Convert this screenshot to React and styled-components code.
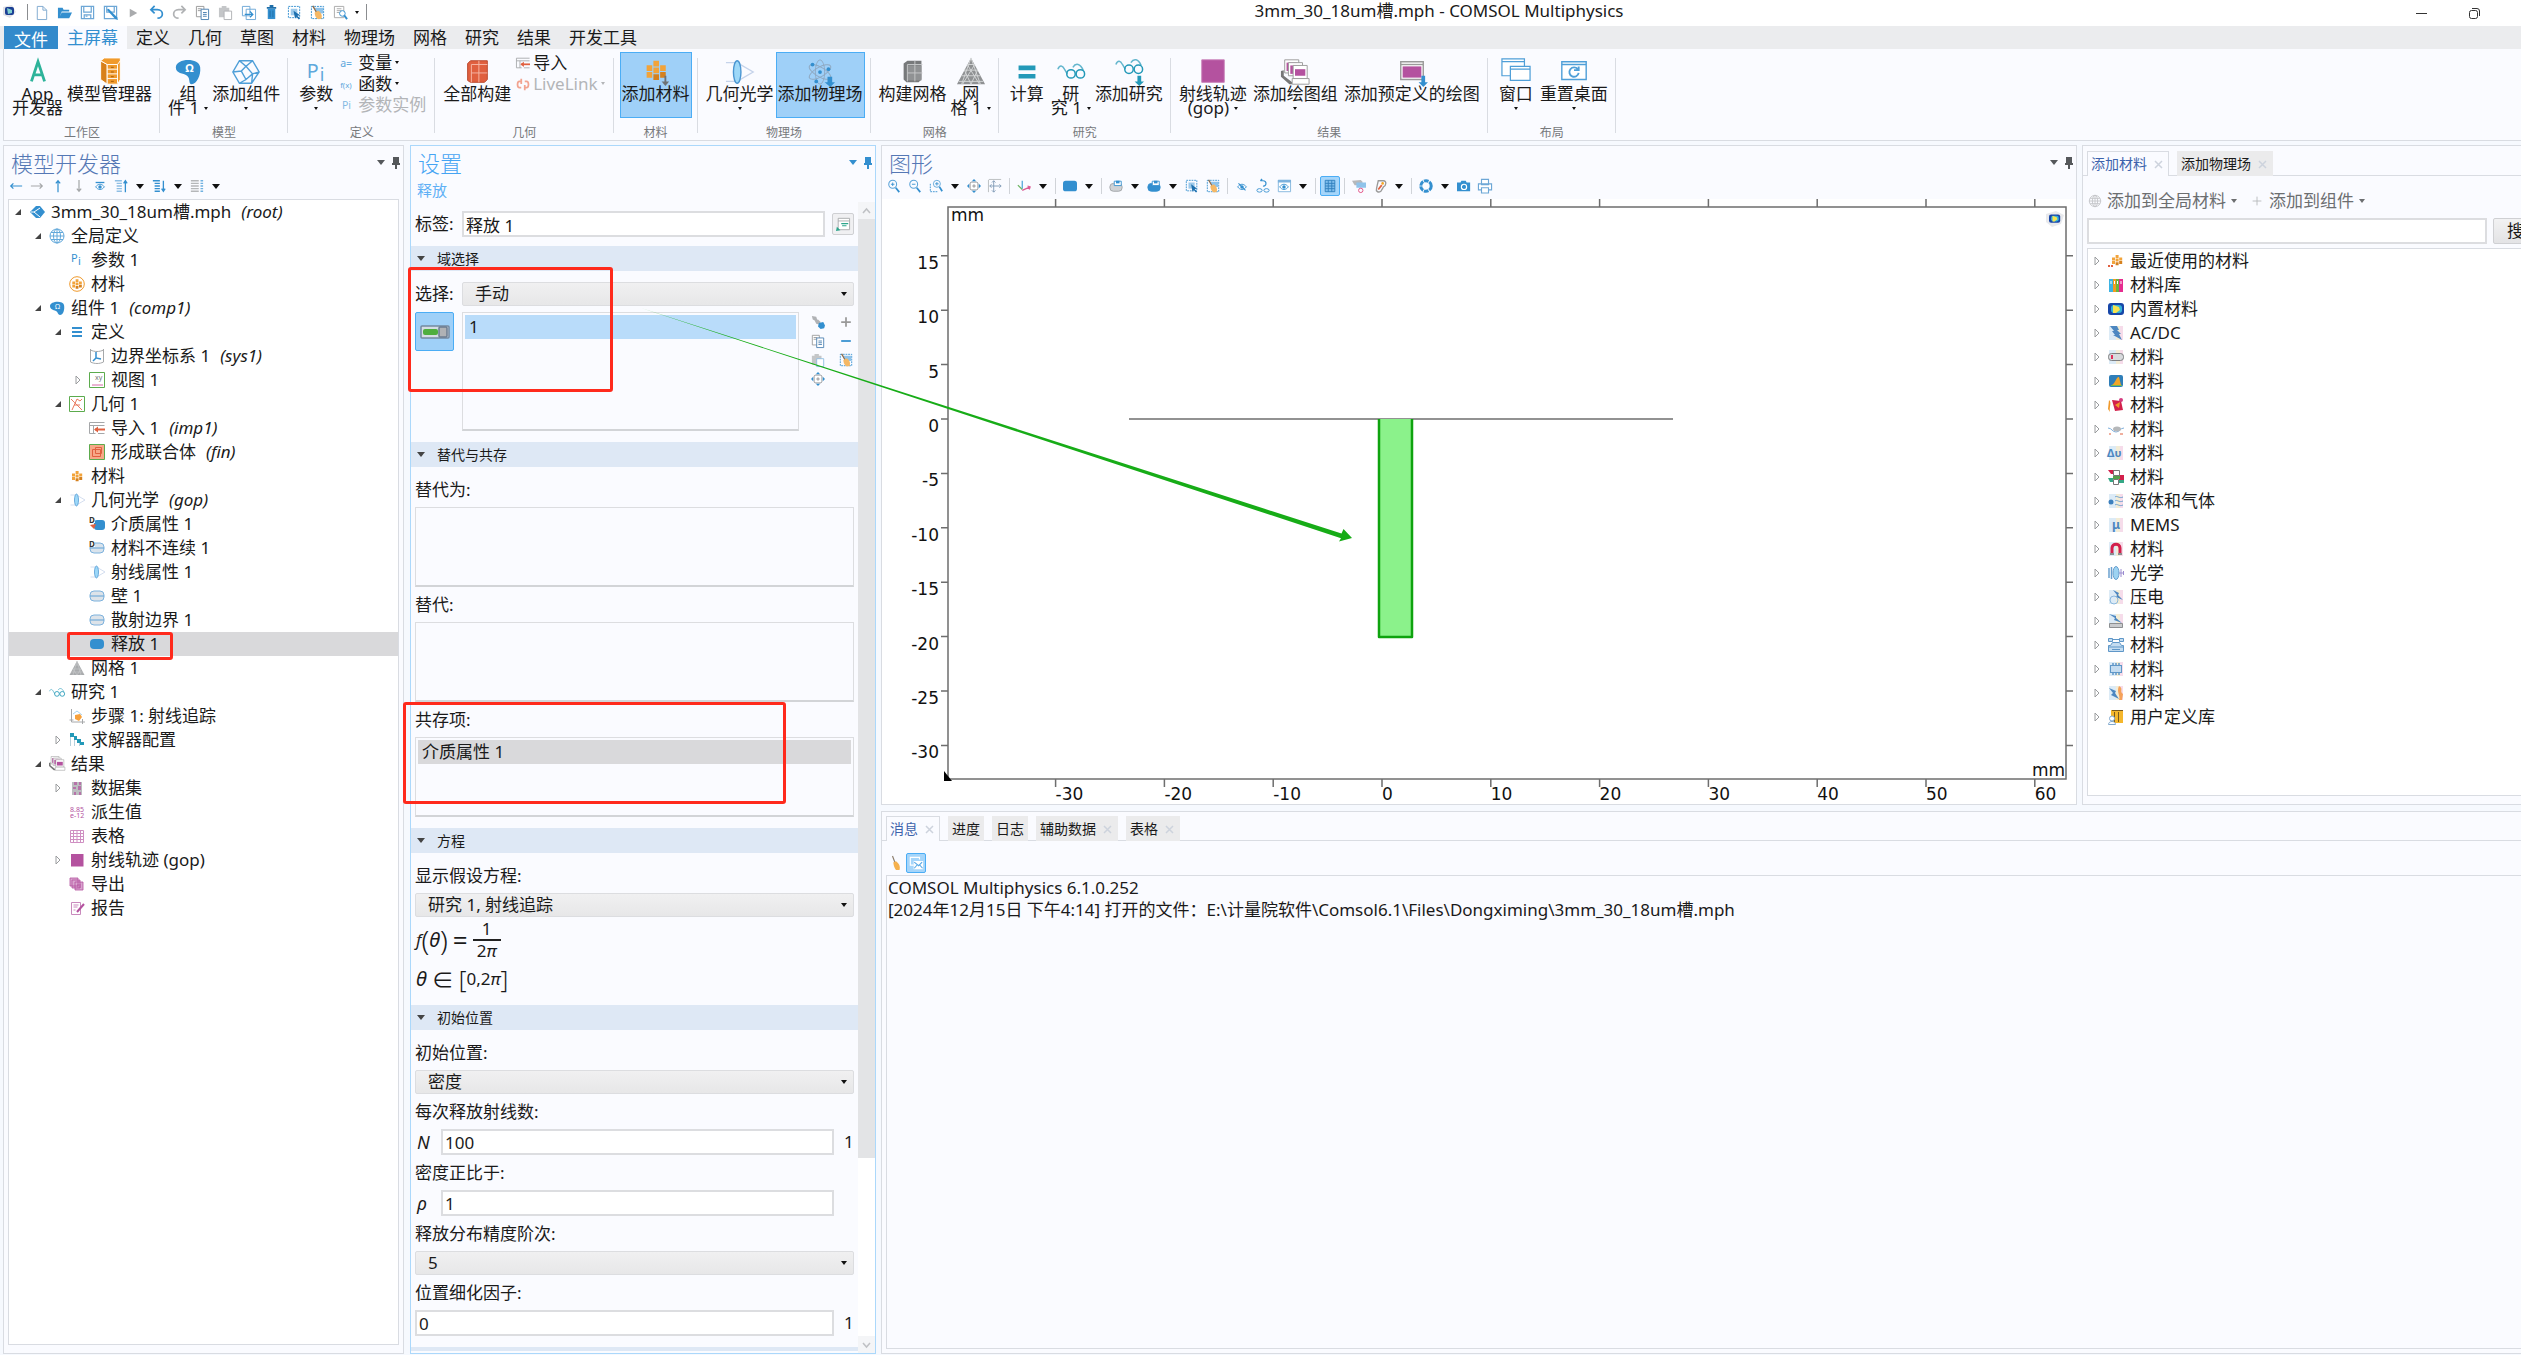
import React from 'react'
import styled, { createGlobalStyle, css } from 'styled-components'

const blue = '#338fcf'
const orange = '#f09a2c'
const teal = '#2399b8'
const purple = '#b4529f'
const red = '#e0603f'

/* ---------- icons ---------- */

const materialCells = (
  <g>
    <path fill="#f2a33a" d="M6 0h5v5H6zM0 4h5v5H0zM12 4h5v5h-5zM6 6h5v5H6zM0 10h5v5H0z" />
    <path fill="#d5811f" d="M12 10h5v5h-5zM6 12h5v5H6z" />
  </g>
)

const atom = (
  <g fill="none" stroke="#8fa9c2">
    <ellipse cx="13" cy="14" rx="5" ry="13" />
    <ellipse cx="13" cy="14" rx="5" ry="13" transform="rotate(60 13 14)" />
    <ellipse cx="13" cy="14" rx="5" ry="13" transform="rotate(-60 13 14)" />
    <g fill={blue} stroke="none">
      <circle cx="13" cy="14" r="2" />
      <circle cx="5" cy="6" r="2" />
      <circle cx="22" cy="11" r="2" />
      <circle cx="9" cy="24" r="2" />
    </g>
  </g>
)

const glasses = (
  <g fill="none" stroke={teal} strokeWidth="1.6">
    <path d="M1 8c2-5 5-4 7 0l3 5M17 6c3-5 8-4 11 3" opacity=".7" />
    <circle cx="15" cy="13" r="4.5" />
    <circle cx="25" cy="13" r="4.5" />
  </g>
)

const plotStack = (
  <g stroke="#9a9a9a">
    <path fill="#777" stroke="none" d="M0 13l3-1v6l9 7v2H9l-9-8z" />
    <path fill="#fff" d="M4 1h15v14H4z" />
    <path fill={purple} stroke="none" d="M6 4h11v9H6z" />
    <path fill="#fff" d="M8 4h15v14H8z" />
    <path fill={purple} stroke="none" d="M10 7h11v9H10z" />
    <path fill="#fff" d="M13 7h15v14H13z" />
    <path fill={purple} stroke="none" d="M15 11h11v7H15z" />
    <path fill="#fff" d="M12 21h18v6H12z" />
  </g>
)

const lens = (
  <g fill="none" stroke="#c5d3ea" strokeWidth="1.5">
    <path d="M1 4h12l17 10-17 10H1" />
    <ellipse cx="13" cy="14" rx="4" ry="12" fill="#9dd8f8" stroke="#4b96d2" />
  </g>
)

const selectBox = (
  <g>
    <path fill="none" stroke={blue} strokeDasharray="2 1" d="M1.5 1.5h12v12h-12z" />
    <path fill="#9cc9ea" d="M4 4h7v7H4z" />
    <path fill="#1d6fae" d="M7 6l7 5-3 .5 3 3-1.5 1-2.5-3-1.5 2z" />
  </g>
)

const brush = (
  <g>
    <path fill="none" stroke={blue} strokeDasharray="2 1" d="M1.5 1.5h13v13h-13z" />
    <path fill="#8fc3ea" d="M5 3h9v6H8z" />
    <path stroke="#8a6a4a" strokeWidth="1.5" d="M3 1l4 7" />
    <path fill="#f5b865" d="M5 8l4-2c4 3 4 6 3 9H8c-2-2-3-4-3-7z" />
  </g>
)

const capsule = (fill, line) => (
  <g>
    <rect x="1" y="3" width="14" height="10" rx="4" fill={fill} stroke="#7db2dd" />
    {line && <path stroke="#5fa1d6" d="M1 8h14" />}
  </g>
)

const printBox = (fill, stroke) => (
  <g>
    <rect x="1" y="5" width="14" height="9" rx="4" fill={fill} stroke={stroke} />
    <path fill="#fff" stroke={blue} d="M6 2.5h8v5H6z" />
    <path fill={blue} d="M8 2h4v3H8z" />
  </g>
)

const bolt = <path fill="#4d87c0" d="M2 1h7l2 4h-2l4 4h-2l3 6-9-5h2L4 6h2z" />
const pastel = (
  <g>
    <path fill="#dcebf6" d="M1 1h7v14H1z" />
    <path fill="#f3ecd6" d="M8 1h4v14H8z" />
    <path fill="#f6dcea" d="M12 1h3v14h-3z" />
  </g>
)
const colormap = (
  <g>
    <rect x="0" y="2" width="16" height="12" rx="3" fill="#1746a8" />
    <rect x="3" y="4" width="11" height="8" rx="3" fill="#35b3d8" />
    <path fill="#f7e34f" d="M5 4l6 2 1 3-4 3H5z" />
  </g>
)

const magnifier = (
  <g fill="none" stroke="#5aa3d8" strokeWidth="1.2">
    <circle cx="6.5" cy="6" r="4.5" />
    <path stroke={blue} strokeWidth="2" d="M10 10l4 5" />
  </g>
)

const eye = (
  <g>
    <path fill="none" stroke={blue} d="M3 9c3-4 7-4 10 0-3 4-7 4-10 0z" />
    <circle cx="8" cy="9" r="2" fill={blue} />
  </g>
)

const icons = {
  /* quick access */
  logo: <g><path fill="#e2e3e6" d="M1 3l9-2 4 7-6 6-7-3z" /><rect x="3" y="3" width="9" height="8" rx="2" fill="#1c3f94" /><path fill="#7fcfd0" d="M5 4l5 2v3l-4 1z" /></g>,
  newFile: <path fill="#fff" stroke="#7ea9cf" d="M3.5 1.5h6l4 4v10h-10zM9.5 1.5v4h4" />,
  open: <path fill={blue} d="M1 3h5l1 2h6v2H5l-2 5v2H1zM5 8h11l-3 6H2z" />,
  save: <path fill="none" stroke="#6da7d6" strokeWidth="1.3" d="M1.5 1.5h13v13h-13zM4 1.5v6h8v-6M4.5 14.5v-4h7v4M6 12h2" />,
  saveAs: <g><path fill="none" stroke="#6da7d6" strokeWidth="1.3" d="M1.5 1.5h13v13h-13zM4 1.5v6h8v-6" /><path fill={blue} d="M4 5l2-1 9 9 1 3-3-1z" /></g>,
  play: <path fill="#a9abad" d="M4 4l8 4.5-8 4.5z" />,
  undo: <path fill="none" stroke={blue} strokeWidth="1.8" d="M6 1L2 5l4 4M2 5h7c7 0 7 9 0 9" />,
  redo: <path fill="none" stroke="#b0b2b4" strokeWidth="1.8" d="M10 1l4 4-4 4M14 5H7c-7 0-7 9 0 9" />,
  copy: <g fill="#fff" stroke="#999"><path d="M1.5 1.5h8v11h-8zM3 4h4M3 6h4" /><path stroke="#4a7fb0" d="M6.5 4.5h8v11h-8zM8.5 8h4M8.5 10h4M8.5 12h4" /></g>,
  paste: <g><path fill="#c4c6c8" d="M1 3h11v10H1zM4 1h5v3H4z" /><path fill="#fff" stroke="#b0b2b4" d="M6.5 6.5h8v9h-8z" /></g>,
  pasteBlue: <g><path fill="#c4c6c8" d="M1 3h11v10H1zM4 1h5v3H4z" /><path fill="#fff" stroke="#8bbbe0" d="M6.5 6.5h8v9h-8z" /></g>,
  duplicate: <g fill="#fff" stroke="#6da7d6"><path d="M1.5 1.5h8v10h-8zM5.5 4.5h10v11h-10z" /><path stroke={blue} strokeWidth="1.5" d="M4 10h8M9.5 7l3 3-3 3" /></g>,
  trash: <g><path fill="#1f6ea8" d="M3 2h10v2H3zM6 0h4v2H6z" /><path fill={blue} d="M4 4h8v11H4z" /><path stroke="#1f6ea8" d="M6.5 6v7M9.5 6v7" /></g>,
  selectBox,
  brush,
  find: <g><path fill="#fff" stroke="#aaa" d="M1.5 1.5h10v12h-10zM4 4h5M4 6h5M4 8h3" /><circle cx="10" cy="9" r="3" fill="#fff" stroke={blue} /><path stroke={blue} strokeWidth="2" d="M12 11l3 4" /></g>,

  /* ribbon, small */
  variable: <text x="-1" y="12" fontSize="12" fill="#5fa8dc">a=</text>,
  fx: <text x="-1" y="12" fontSize="9" fill="#5fa8dc">f(x)</text>,
  paramCase: <g opacity=".6"><text x="1" y="13" fontSize="12" fill={blue}>Pi</text></g>,
  importIco: <g><path fill="none" stroke="#a5a7a9" d="M.5 2.5h15M.5 5.5h15M.5 2.5v11h6M4.5 5.5v8M9 13.5h6.5" /><path stroke={red} strokeWidth="2" d="M6 9.5h10" /><path fill={red} d="M5 9.5l4-3v6z" /></g>,
  livelink: <g fill="none" stroke="#f2a390" strokeWidth="2"><path d="M7 5H4c-3 0-3 7 0 7h2M9 12h3c3 0 3-7 0-7h-2M6 2v6M10 9v6" /></g>,

  /* tree */
  root: <g><path fill={blue} d="M7 2h4l5 6-5 6H7L1 8z" /><path fill="none" stroke="#fff" d="M11 4L5 8l6 5M5 8H2" /></g>,
  globe: <g fill="none" stroke="#62a8da"><circle cx="8" cy="8" r="7" /><ellipse cx="8" cy="8" rx="3.5" ry="7" /><path d="M1 8h14M2 4.5h12M2 11.5h12M8 1v14" /></g>,
  globeGrey: <g fill="none" stroke="#c3c5c8"><circle cx="8" cy="8" r="6.5" /><ellipse cx="8" cy="8" rx="3" ry="6.5" /><path d="M1 8h14M2.5 5h11M2.5 11h11M8 1v14" /></g>,
  pi: <g fill={blue}><text x="2" y="10" fontSize="11">P</text><text x="9" y="13" fontSize="11">i</text></g>,
  matRing: <g><circle cx="8" cy="8" r="7.3" fill="none" stroke={orange} /><g transform="translate(3.3 3.2) scale(.56)">{materialCells}</g></g>,
  mat: <g transform="translate(3 3) scale(.6)">{materialCells}</g>,
  comp: <g><path fill={blue} d="M1 6c0-5 13-6 14-1 1 5-1 10-4 10-2 0-2-3-4-4-3-1-6-2-6-5z" /><text x="6" y="9" fontSize="7" fill="#fff">Ω</text></g>,
  defs: <path fill={blue} d="M3 3h10v2H3zM3 7h10v2H3zM3 11h10v2H3z" />,
  csys: <g fill="none"><path stroke="#a6a8aa" d="M1.5 1v13c4 2 9 2 13 0V1M1.5 2c4 2 9 2 13 0" /><path stroke={blue} strokeWidth="1.5" d="M7 4v6l5 1M7 10l-3 3" /></g>,
  view: <g><path fill="#fff" stroke="#5cab4d" d="M.5.5h15v15H.5z" /><path stroke="#d76aa8" d="M3 13h11" /><text x="6" y="8" fontSize="7" fill="#777">xy</text></g>,
  geom: <g fill="none"><path stroke="#5cab4d" d="M.5.5h15v15H.5z" /><path stroke="#ea7a5f" d="M2 3c3 3 5 5 6 6l5 5M3 14l5-11 3 2 2-2M5 9h6" /></g>,
  union: <g><path fill="#f7a888" stroke="#5cab4d" d="M.5.5h15v15H.5z" /><path fill="none" stroke={red} d="M3.5 5.5h8v7h-8zM6.5 3.5h6v6h-6z" /></g>,
  optics: <g transform="translate(1 1) scale(.5)">{lens}</g>,
  medium: <g><rect x="5" y="4" width="11" height="10" rx="3" fill={blue} /><path fill="#fff" d="M0 0h6v7H0z" /><text x="0" y="7" fontSize="8" fontWeight="700" fill="#333">D</text><path fill={red} d="M1 9l6-1-2 5z" /></g>,
  discont: <g>{capsule('#d9e3ec', true)}<path fill="#fff" d="M0 0h6v7H0z" /><text x="0" y="7" fontSize="8" fontWeight="700" fill="#333">D</text></g>,
  wall: capsule('#dde3e9', true),
  release: <rect x="1" y="3" width="14" height="10" rx="4" fill={blue} />,
  mesh: <g><path fill="#a9abad" d="M8 1l7.5 14H.5z" /><path fill="none" stroke="#c9cbcd" strokeWidth=".6" d="M6 5h4M4 9h8M2 12h12M8 1l4 14M8 1L4 15M4 9l4 6 4-6" /></g>,
  study: <g transform="translate(0 3) scale(.53)">{glasses}</g>,
  step: <g><path fill="none" stroke="#a6a8aa" d="M2.5 1v13H16M.5 12h4M13.5 11v5" /><path fill="none" stroke="#a8d3ee" d="M4 6l4-3 5 4" /><path fill="#f7a13c" d="M6 7l5-1 2 3-3 4-4-2z" /></g>,
  solver: <g><path stroke="#b5d0dc" d="M1.5 3v11M5.5 6v8M10.5 9v5" /><path fill={teal} d="M1 1h4v3h3v3h4v3h3v3h-4v-2H8V8H5V5H1z" /></g>,
  results: <g transform="scale(.53)">{plotStack}</g>,
  dataset: <g><path fill="#bcbec0" d="M3 2h10v13H3z" /><path fill={purple} d="M5 2h3v3H5zM10 2h2v3h-2zM4 7h3v2H4zM9 6h3v4H9zM5 12h2v3H5zM10 12h2v3h-2z" opacity=".7" /></g>,
  derived: <g fill={purple} fontSize="7"><text x="1" y="8">8.85</text><text x="1" y="14">e-12</text></g>,
  table: <path fill="#fff" stroke="#cf8fc2" d="M1.5 2.5h13v12h-13zM1.5 5.5h13M1.5 8.5h13M1.5 11.5h13M4.5 2.5v12M8 2.5v12M11.5 2.5v12" />,
  plot: <path fill={purple} d="M2 2h12.5v12.5H2z" />,
  exportIco: <g fill="#d9a5cf" stroke={purple} strokeWidth=".8"><path d="M1 2h8v8H1zM3 4h8v8H3zM6 6h8v8H6z" /><path d="M8 9h4M8 11h4" /></g>,
  report: <g><path fill="#fff" stroke="#c98abd" d="M2.5 2.5h9v12h-9zM4.5 5h5M4.5 7h4M4.5 10h2" /><path stroke={purple} strokeWidth="2" d="M15 4l-7 8" /></g>,

  /* panel toolbars */
  left: <path fill="none" stroke={blue} strokeWidth="1.4" d="M15 8H2M5 5L2 8l3 3" />,
  right: <path fill="none" stroke="#a5a7a9" strokeWidth="1.4" d="M1 8h13M11 5l3 3-3 3" />,
  up: <path fill="none" stroke={blue} strokeWidth="1.4" d="M8 15V2M5.5 5L8 2l2.5 3" />,
  down: <path fill="none" stroke="#a5a7a9" strokeWidth="1.4" d="M8 1v13M5.5 11L8 14l2.5-3" />,
  show: <g><path stroke={blue} strokeWidth="1.5" d="M3 4h10" />{eye}</g>,
  collapse: <g><path stroke="#8fbfe4" strokeWidth="1.5" d="M1 2h8M3 5h6M3 8h6M3 11h6M3 14h6" /><path fill="none" stroke={blue} strokeWidth="1.5" d="M13 15V2M11 5l2-3 2 3" /></g>,
  expand: <g><path stroke={blue} strokeWidth="1.5" d="M1 2h8M3 5h6M3 8h6M3 11h6M3 14h6" /><path fill="none" stroke={blue} strokeWidth="1.5" d="M13 2v12M11 11l2 3 2-3" /></g>,
  columns: <g strokeWidth="1.5"><path stroke="#b5b7b9" d="M1 2h9M1 5h9M1 8h9M1 11h9M1 14h9" /><path stroke="#6fb1e0" d="M12 2h3M12 5h3M12 8h3M12 11h3M12 14h3" /></g>,

  zoomIn: <g>{magnifier}<path stroke={blue} d="M4.5 6h4M6.5 4v4" /></g>,
  zoomOut: <g>{magnifier}<path stroke={blue} d="M4.5 6h4" /></g>,
  zoomBox: <g><path fill="none" stroke={blue} strokeDasharray="2 1" d="M1.5 5.5v9h9" /><circle cx="9" cy="5.5" r="4" fill="none" stroke="#5aa3d8" /><path stroke={blue} strokeWidth="2" d="M12 9l3 5" /><path stroke={blue} d="M7 5.5h4M9 3.5v4" /></g>,
  extents: <g><rect x="3.5" y="3.5" width="9" height="9" rx="2" fill="#fff" stroke="#8b8d90" /><path stroke="#8b8d90" d="M6 8h4M8 6v4" /><path fill={blue} d="M8 0l2.500 2.500h-5zM8 16l2.500-2.500h-5zM0 8l2.500-2.500v5zM16 8l-2.500-2.500v5z" /></g>,
  fit: <g fill="none"><path stroke="#b5b7b9" d="M1 .5h14M.5 1v14" /><path stroke="#7d97b3" d="M2 8h13M6.500 2v13M4 6L2 8l2 2M13 6l2 2-2 2M4.500 13l2 2 2-2M4.500 4l2-2 2 2" /></g>,
  axes: <g fill="none" strokeWidth="1.4"><path stroke="#4ba3d8" d="M6 2v9" /><path stroke="#6cb562" d="M1 7l5 5" /><path stroke="#dc5a94" d="M6 13l9-4M12 8l3 1-1 3" /></g>,
  domain: <rect x="0" y="2" width="16" height="12" rx="3" fill={blue} />,
  printGrey: printBox('#cfd2d5', '#9da0a3'),
  printBlue: printBox(blue, blue),
  hide: <g>{eye}<path stroke={blue} strokeWidth="1.3" d="M4 5l8 8" /></g>,
  resetHide: <g><path fill="none" stroke={blue} strokeWidth="1.4" d="M5 2h3c5 0 4 7 0 6M5 2l2-2" /><ellipse cx="4" cy="13" rx="3" ry="2" fill="none" stroke={blue} /><ellipse cx="12" cy="13" rx="3" ry="2" fill="none" stroke={blue} /></g>,
  viewHide: <g><path fill="#fff" stroke="#7db2dd" d="M1.5 1.5h14v13h-14z" /><path fill="#7db2dd" d="M1 1h15v3H1z" />{eye}</g>,
  grid: <path fill="#7fbdec" stroke="#2f7fbd" d="M2.5 1.5h11v13h-11zM6 1.5v13M10 1.5v13M2.5 5h11M2.5 8h11M2.5 11h11" />,
  clip: <g><path fill="#b6b8ba" d="M0 2l10-1 2 2v4H3z" /><path fill="#8fc3ea" d="M5 4h11v6H5z" /><circle cx="10" cy="13" r="2.5" fill="none" stroke="#e0457b" /></g>,
  link: <g fill="none"><path stroke="#999" strokeWidth="1.5" d="M6 2h6c4 0 3 6 0 7l-3 5c-3 2-6 0-5-3z" /><path stroke={red} strokeWidth="2" d="M6 12l4-5" /><circle cx="11" cy="5" r="1.5" fill="#f5a623" /></g>,
  shutter: <g fill="none" stroke={blue}><circle cx="8" cy="8" r="6" strokeWidth="3.5" strokeDasharray="5.3 1" /></g>,
  camera: <g><path fill={blue} d="M0 4h4l1-2h5l1 2h4v10H0z" /><circle cx="8" cy="9" r="3" fill="none" stroke="#fff" strokeWidth="1.3" /></g>,
  printer: <g fill="#fff" stroke="#6da7d6" strokeWidth="1.3"><path d="M4 .5h8v6H4zM.5 5.500h15v7H.5z" /><path d="M4 10h8v6H4z" /></g>,

  /* settings */
  noteBtn: <g><path fill="#fff" stroke="#a5a7a9" d="M2.5 1.5h13v13h-13zM2.5 4.5h13" /><path stroke="#2ba58b" strokeWidth="1.3" d="M6 7.5h8M7 10h5" /><path fill="#2ba58b" d="M0 16l1-5 4 4z" /></g>,
  selList: <g><path fill="#b0b2b5" d="M1 1l5 1 1 3-1 2-4-2zM4 6l4-1 3 3-1 3-4-1z" /><path fill={blue} d="M9 9l5-1 2 4-1 3-4 1-3-3z" /></g>,
  plus: <path stroke="#999" strokeWidth="2" d="M2.5 8h11M8 2.5v11" />,
  plusThin: <path stroke="#b5b7b9" d="M3 8h10M8 3v10" />,
  minus: <path stroke={blue} strokeWidth="2" d="M2.5 8h11" />,
  broom: <g><path stroke="#8a7b6a" strokeWidth="1.3" d="M4 0l3 8" /><path fill="#f5b04c" d="M5 7l3-1c4 3 5 6 4 10H8C6 13 5 10 5 7z" /></g>,
  mail: <g fill="none" stroke="#fff" strokeWidth="1.3"><path d="M12 4V1.500H1.500v9h4" /><path fill="#fff" d="M6 6.500h9.500v8H6z" /><path d="M6 7l5 4 4-4M6 14l3.500-4M15.500 14L12 10" stroke="#5aa9e6" /></g>,

  /* material library */
  recent: <g><g transform="translate(4 2) scale(.6)">{materialCells}</g><path stroke={red} strokeDasharray="2 1" strokeWidth="2" d="M0 13h6" /></g>,
  books: <g><path fill="#3db3e3" d="M1 2h4v13H1z" /><path fill="#f29a1f" d="M5 2h3v13H5z" /><path fill="#6bb340" d="M8 2h3v13H8z" /><path fill="#e62c8f" d="M11 2h4v13h-4z" /><path stroke="#fff" d="M3 4v3M6.5 4v3M9.5 4v3M13 4v3" /></g>,
  colormap,
  acdc: <g>{pastel}{bolt}</g>,
  battery: <g>{pastel}<rect x=".5" y="4.5" width="15" height="7" rx="3" fill="#d8dadd" stroke="#7d7f81" /><path fill="#e0305c" d="M3 6h2v4H3z" /></g>,
  slope: <g><rect x="1" y="2" width="14" height="12" rx="2" fill="#2f7eb8" /><path fill="#f2a527" d="M4 12c3-1 4-8 7-8l2 8z" /><path fill="#76bb4b" d="M3 12h11v1H3z" /></g>,
  bio: <g><path fill="#d2204b" d="M4 3l9 1 2 9-8 1z" /><path fill={orange} d="M1 3c3 2 0 7 1 12L0 12zM7 8l5-3-1 6z" /><circle cx="13" cy="3" r="2" fill="#d43b7f" /></g>,
  bubble: <g><path fill="none" stroke="#7fb0dd" d="M0 7c4 0 4 4 8 4s4-4 8-4" /><ellipse cx="9" cy="8" rx="4" ry="2.5" fill="#b6b8ba" /><path stroke={red} d="M1 13h2M12 13h3" /></g>,
  delta: <g>{pastel}<text x="-1" y="12" fontSize="11" fontWeight="700" fill="#4d87c0">Δυ</text></g>,
  chem: <g><path fill="#d2204b" d="M0 1h6v4H3zM11 6h5v5h-5z" /><path fill="#35a886" d="M0 9h5l1 4H2zM10 11h6v3h-6z" /><path fill="#fff" stroke="#777" d="M5.5 1.5h6v5h-6zM5.5 10.5h5v5h-5z" /><path fill="#54a04a" d="M5 7h7v3H5z" /></g>,
  fluid: <g>{pastel}<circle cx="3" cy="9" r="2.5" fill="#3b7fbd" /><path fill="none" stroke="#6aa0cf" d="M7 4c2-2 4 2 8 0M7 8c2-2 4 2 8 0M7 12c2-2 4 2 8 0" /></g>,
  mems: <g>{pastel}<text x="4" y="12" fontSize="12" fontWeight="700" fill="#4d87c0">μ</text></g>,
  magnet: <g>{pastel}<path fill="none" stroke="#d2204b" strokeWidth="3" d="M4 12V7c0-5 8-5 8 0v5" /><path fill="#8c8e90" d="M2 12h4v2H2zM10 12h4v2h-4z" /></g>,
  wave: <g stroke="#6aa0cf" fill="none"><path d="M1 3v10M3.5 2v12" strokeWidth="1.5" /><ellipse cx="8" cy="8" rx="3" ry="6.5" fill="#9dd3f2" /><path d="M13 4v8M15.5 6v4M11 8h5" stroke="#9b8cd0" /></g>,
  piezo: <g>{pastel}<path fill="#4d87c0" d="M5 1l6 3-1 2 5 5-7-3 1-2z" /><circle cx="6" cy="11" r="4" fill="none" stroke="#8bb8dd" /></g>,
  resist: <g>{pastel}<path fill="#4d87c0" d="M1 1l7 2v2l6 5-8-3 1-2z" /><path fill="#c9cbcd" stroke="#8d8f91" d="M1.5 10.5h13v4h-13z" /></g>,
  car: <g fill="#c4dcf0" stroke="#5f97c8"><path d="M.5 1.500h4v3h-4zM11.500 1.500h4v3h-4zM4.500 2.500h7" /><path d="M4.500 5.500h7l2 3h2v6H.5v-6h2z" /><path d="M1 10h14M4 12.500h8" /></g>,
  chip: <g>{pastel}<path stroke="#5f97c8" strokeWidth="1.5" d="M5 2v12M8 2v12M11 2v12" /><rect x="2.5" y="4.5" width="11" height="7" fill="#c4dcf0" stroke="#5f97c8" /></g>,
  thermo: <g>{pastel}<path fill="#4d87c0" d="M1 3l7 3-1 2 4 6-8-4 2-2z" /><path fill="#f5a25a" d="M11 1c5 3 0 5 4 8l-1 6h-3c2-4-3-8 0-14z" /></g>,
  userLib: <g><path fill="#f5b72c" d="M3 1h12v13H3z" /><path stroke="#7a5a1f" d="M6.5 3v10M10.5 3v10M4 1.5h11" /><path fill="#fff" stroke="#7fa8cf" d="M.5 15.5c0-4 7-4 7 0zM4 7a2.5 2.5 0 1 1 0 5 2.5 2.5 0 0 1 0-5z" /></g>,
}

const Icon = ({ name, size = 16 }) => (
  <Svg width={size} height={size} viewBox="0 0 16 16" aria-hidden="true">{icons[name]}</Svg>
)

const bigIcons = {
  app: <path fill="none" stroke="#2db39a" strokeWidth="3" d="M9 26L16 5l7 21M11 19h10" />,
  cabinet: <g stroke="#fff"><path fill="#d8801a" d="M6 4l7 4v21l-7-5z" /><path fill={orange} d="M6 4l4-3h17v23l-3 5H13V8z" /><path fill="none" d="M13 8h11v20M13 13h11M13 18h11M13 23h11M24 8l3-4" /><path stroke="#a35b09" d="M17 11h3M17 16h3M17 21h3M17 26h3" /></g>,
  comp: <g><path fill={blue} d="M3 11C3 1 28 0 29 11c1 9-4 18-9 18-4 0-1-6-5-9C11 17 3 18 3 11z" /><text x="13" y="16" fontSize="12" fontWeight="700" fill="#fff">Ω</text></g>,
  addComp: <g fill="none" stroke="#4f9fd8" strokeWidth="1.5"><path d="M9 4h14l7 12-8 12H9L2 16zM9 4l7 6 7-6M2 16l9-1 5-5 7 8-7 6-5-9M30 16l-7 2-1 10M9 28l7-4" /></g>,
  params: <g fill="#5fa8dc"><text x="6" y="22" fontSize="21">P</text><text x="20" y="26" fontSize="19">i</text></g>,
  build: <g><path fill={red} stroke="#b8452a" d="M6 7l3-3h18v20l-3 3H9l-3-2z" /><path fill="none" stroke="#f6b8a6" d="M10 8h17M18 4v23M10 8v19M10 17h17" /></g>,
  addMat: <g><g transform="translate(6 4) scale(1.2)">{materialCells}</g><path stroke="#6f7274" strokeWidth="2" d="M26 20v7" /><path fill="#6f7274" d="M22 26h8l-4 5z" /></g>,
  lens: <g transform="translate(0 2)">{lens}</g>,
  addPhys: <g><g transform="translate(3 2)">{atom}</g><path fill={blue} d="M24 21h5v6h3l-5 5-6-5h3z" /></g>,
  buildMesh: <g><path fill="#77797b" d="M6 7l4-3h15v20l-3 3H9l-3-3z" /><path fill="#909294" d="M10 9h15v16H10z" /><path fill="none" stroke="#c7c9cb" d="M10 8h16M18 4v22M10 8v18M10 17h16" /></g>,
  mesh: <g><path fill="#8f9193" d="M16 1l15 28H1z" /><path fill="none" stroke="#d4d6d8" d="M12 8h8M9 14h14M6 20h20M3 26h26M16 1l10 28M16 1L6 29M12 8l13 21M20 8L7 29M9 14l7 15 7-15" /></g>,
  compute: <path fill={teal} d="M7 9h18v5H7zM7 18h18v5H7z" />,
  study: <g transform="translate(1 5)">{glasses}</g>,
  addStudy: <g><g transform="translate(1 0)">{glasses}</g><path fill={teal} d="M25 20h4v6h3l-5 5-5-5h3z" /></g>,
  plot: <path fill={purple} stroke="#c77fb8" d="M4 3h24v24H4z" />,
  plotGroup: <g transform="translate(1 2)">{plotStack}</g>,
  predefined: <g><path fill="#fff" stroke="#9a9a9a" strokeWidth="1.5" d="M4 5h24v19H4z" /><path stroke="#9a9a9a" strokeWidth="1.5" d="M4 8h24" /><path fill={purple} d="M6 10h20v12H6z" /><path fill={blue} d="M26 20h4v7h3l-5 5-5-5h3z" /></g>,
  windows: <g fill="#fff" stroke="#4f9fd8" strokeWidth="1.3"><path d="M1 2h24v18H1zM1 5h24" /><path d="M10 10h21v15H10zM10 13h21" /></g>,
  reset: <g fill="#fff" stroke="#4f9fd8" strokeWidth="1.5"><path d="M3 5h26v19H3zM3 8h26" /><path fill="none" strokeWidth="2" d="M20 13a5 5 0 1 0 1 4M21 10v4h-5" /></g>,
}

/* ---------- shared parts ---------- */

const GlobalStyle = createGlobalStyle`
  * { box-sizing: border-box; }
  body {
    margin: 0;
    overflow: hidden;
    background: #f6f9fe;
    color: #1a1a1a;
    font: 17px/24px "Noto Sans", "Noto Sans CJK SC", sans-serif;
  }
  button, input, select { font: inherit; color: inherit; margin: 0; }
  button { background: none; border: 0; padding: 0; }
  ul { margin: 0; padding: 0; list-style: none; }
`

const Svg = styled.svg`
  display: block;
  flex: none;
  overflow: visible;
`

const Page = styled.div`
  position: relative;
  display: flex;
  flex-direction: column;
  min-height: 100vh;
`

const Caret = styled.span`
  display: inline-block;
  flex: none;
  border: ${p => p.$size || 4}px solid transparent;
  border-top: ${p => (p.$size || 4) + 1}px solid ${p => p.$color || '#111'};
  border-bottom: 0;
`

const RedBox = styled.div`
  position: absolute;
  z-index: 5;
  border: 3px solid #ff2a1c;
  border-radius: 3px;
  pointer-events: none;
`

/* ---------- title bar ---------- */

const TitleBar = styled.header`
  display: flex;
  align-items: center;
  height: 26px;
  background: #fff;
`

const QuickAccess = styled.div`
  display: flex;
  align-items: center;
  gap: 3px;
  padding-bottom: 2px;
`

const QuickButton = styled.button`
  display: flex;
  align-items: center;
  justify-content: center;
  width: ${p => (p.$narrow ? 8 : 20)}px;
  height: 22px;
`

const QuickDivider = styled.span`
  width: 1px;
  height: 16px;
  margin: 0 0 0 ${p => (p.$last ? 2 : 4)}px;
  background: #8b8d90;
`

const WindowTitle = styled.h1`
  flex: 1;
  margin: 0;
  padding: 0 0 4px 116px;
  font-size: 17px;
  font-weight: 400;
  line-height: 20px;
  text-align: center;
`

const WindowButton = styled.button`
  display: flex;
  align-items: center;
  justify-content: center;
  width: 53px;
  height: 22px;
  &:last-child { margin-right: 20px; }
`

/* ---------- ribbon ---------- */

const RibbonTabs = styled.nav`
  display: flex;
  height: 23px;
  padding-left: 4px;
  background: #ebecee;
`

const RibbonTab = styled.button`
  padding: 0 9px;
  line-height: 22px;
  white-space: nowrap;
  ${p => p.$active && css`background: #fafbff; color: ${blue};`}
  ${p => p.$file && css`background: #338acb; color: #fff; padding: 5px 10px 0; line-height: 18px;`}
`

const RibbonBody = styled.div`
  display: flex;
  height: 92px;
  margin-left: 3px;
  background: #fafbff;
  border-left: 1px solid #d9dce2;
  border-bottom: 1px solid #d9dce2;
`

const GroupBox = styled.section`
  display: flex;
  flex-direction: column;
  padding: 3px 5px 0 6px;
`

const GroupItems = styled.div`
  display: flex;
  gap: ${p => p.$gap || 0}px;
`

const GroupName = styled.div`
  margin-top: 7px;
  font-size: 12px;
  line-height: 16px;
  color: #77797c;
  text-align: center;
`

const GroupDivider = styled.span`
  width: 1px;
  margin: 9px 0 7px;
  background: #d9dce2;
`

const BigButton = styled.button`
  display: flex;
  flex-direction: column;
  align-items: center;
  min-width: 44px;
  height: 66px;
  padding: 4px 1px 0;
  border: 1px solid ${p => (p.$on ? '#4badf5' : 'transparent')};
  background: ${p => (p.$on ? '#9fd0f8' : 'transparent')};
  white-space: nowrap;
  line-height: 14px;
`

const SecondLine = styled.span`
  display: flex;
  align-items: center;
  gap: 5px;
  height: 14px;
`

const SmallColumn = styled.div`
  display: flex;
  flex-direction: column;
`

const SmallButton = styled.button`
  display: flex;
  align-items: center;
  gap: 3px;
  height: 21px;
  padding: 0 3px;
  line-height: 20px;
  white-space: nowrap;
  color: ${p => (p.disabled ? '#b3b5b8' : 'inherit')};
`

const Big = ({ icon, label, second, caret, on }) => (
  <BigButton $on={on}>
    <Svg width="30" height="30" viewBox="0 0 32 32" aria-hidden="true">{bigIcons[icon]}</Svg>
    <span>{label}</span>
    <SecondLine>
      {second}
      {caret && <Caret $size={2} />}
    </SecondLine>
  </BigButton>
)

const Small = ({ icon, label, caret, disabled }) => (
  <SmallButton disabled={disabled}>
    <Icon name={icon} size={14} />
    {label}
    {caret && <Caret $size={2} $color={disabled ? '#b3b5b8' : '#111'} />}
  </SmallButton>
)

const Group = ({ name, gap, children }) => (
  <>
    <GroupBox>
      <GroupItems $gap={gap}>{children}</GroupItems>
      <GroupName>{name}</GroupName>
    </GroupBox>
    <GroupDivider />
  </>
)

const Ribbon = () => (
  <>
    <RibbonTabs>
      <RibbonTab $file>文件</RibbonTab>
      <RibbonTab $active>主屏幕</RibbonTab>
      {['定义', '几何', '草图', '材料', '物理场', '网格', '研究', '结果', '开发工具'].map(t => (
        <RibbonTab key={t}>{t}</RibbonTab>
      ))}
    </RibbonTabs>
    <RibbonBody>
      <Group name="工作区">
        <Big icon="app" label="App" second="开发器" />
        <Big icon="cabinet" label="模型管理器" />
      </Group>
      <Group name="模型">
        <Big icon="comp" label="组" second="件 1" caret />
        <Big icon="addComp" label="添加组件" caret />
      </Group>
      <Group name="定义">
        <Big icon="params" label="参数" caret />
        <SmallColumn>
          <Small icon="variable" label="变量" caret />
          <Small icon="fx" label="函数" caret />
          <Small icon="paramCase" label="参数实例" disabled />
        </SmallColumn>
      </Group>
      <Group name="几何">
        <Big icon="build" label="全部构建" />
        <SmallColumn>
          <Small icon="importIco" label="导入" />
          <Small icon="livelink" label="LiveLink" caret disabled />
        </SmallColumn>
      </Group>
      <Group name="材料">
        <Big icon="addMat" label="添加材料" on />
      </Group>
      <Group name="物理场">
        <Big icon="lens" label="几何光学" caret />
        <Big icon="addPhys" label="添加物理场" on />
      </Group>
      <Group name="网格">
        <Big icon="buildMesh" label="构建网格" />
        <Big icon="mesh" label="网" second="格 1" caret />
      </Group>
      <Group name="研究">
        <Big icon="compute" label="计算" />
        <Big icon="study" label="研" second="究 1" caret />
        <Big icon="addStudy" label="添加研究" />
      </Group>
      <Group name="结果" gap={2}>
        <Big icon="plot" label="射线轨迹" second="(gop)" caret />
        <Big icon="plotGroup" label="添加绘图组" caret />
        <Big icon="predefined" label="添加预定义的绘图" />
      </Group>
      <Group name="布局">
        <Big icon="windows" label="窗口" caret />
        <Big icon="reset" label="重置桌面" caret />
      </Group>
    </RibbonBody>
  </>
)

/* ---------- panels ---------- */

const Workspace = styled.main`
  display: flex;
  flex: 1;
  gap: 6px;
  padding: 4px 0 1px 3px;
`

const Panel = styled.section`
  position: relative;
  display: flex;
  flex-direction: column;
  background: #fafbff;
  border: 1px solid ${p => (p.$focus ? '#abd8fb' : '#d9dce2')};
`

const ModelPanel = styled(Panel)`
  flex: none;
  width: 401px;
`

const SettingsPanel = styled(Panel)`
  flex: none;
  width: 466px;
`

const PanelHead = styled.div`
  display: flex;
  align-items: center;
  gap: 7px;
  height: 30px;
  padding: 3px 3px 0 7px;
`

const PanelTitle = styled.h2`
  flex: 1;
  margin: 0;
  font-size: 22px;
  font-weight: 300;
  line-height: 26px;
  color: ${p => (p.$focus ? '#45a4f3' : '#5578b5')};
`

const Pin = ({ color = '#55585b' }) => (
  <Svg width="8" height="12" viewBox="0 0 8 12" aria-hidden="true">
    <path fill={color} d="M1 0h6v6h1v2H5v4H3V8H0V6h1z" />
  </Svg>
)

const Toolbar = styled.div`
  display: flex;
  align-items: center;
  gap: 1px;
  height: 20px;
  margin-bottom: 3px;
  padding-left: 2px;
`

const ToolButton = styled.button`
  display: flex;
  align-items: center;
  justify-content: center;
  width: ${p => (p.$caret ? 16 : 20)}px;
  height: 20px;
  ${p => p.$on && css`
    background: #a5d5fa;
    border: 1px solid #4badf5;
    border-radius: 2px;
  `}
`

const ToolDivider = styled.span`
  width: 1px;
  height: 16px;
  margin: 0 3px;
  background: #d0d3d8;
`

const tools = (items, size) => items.map((name, i) => {
  if (name === '|') return <ToolDivider key={i} />
  if (name === 'v') return <ToolButton key={i} $caret aria-label="menu"><Caret /></ToolButton>
  const on = name[0] === '*'
  const icon = on ? name.slice(1) : name
  return <ToolButton key={i} $on={on} aria-label={icon}><Icon name={icon} size={size} /></ToolButton>
})

/* ---------- trees ---------- */

const TreeBox = styled.div`
  position: relative;
  flex: 1;
  margin: 0 4px 8px;
  background: #fff;
  border: 1px solid #d9dce2;
`

const TreeRow = styled.li`
  display: flex;
  align-items: center;
  height: 24px;
  padding-left: ${p => p.$level * 20}px;
  background: ${p => (p.$selected ? '#d9d9db' : 'none')};
  white-space: nowrap;
`

const Twisty = styled.span`
  display: flex;
  justify-content: center;
  width: 18px;
`

const TreeIcon = styled.span`
  display: flex;
  justify-content: center;
  width: 20px;
  margin-right: 4px;
`

const Tag = styled.em`
  margin-left: 10px;
`

const TwistyMark = ({ open }) => (
  <Svg width="8" height="8" viewBox="0 0 8 8" aria-hidden="true">
    {open
      ? <path fill="#444" d="M7 1v6H1z" />
      : <path fill="#fff" stroke="#9a9c9e" d="M2 0l4 4-4 4z" />}
  </Svg>
)

const Node = ({ level, icon, label, tag, state, selected }) => (
  <TreeRow $level={level} $selected={selected}>
    <Twisty>{state && <TwistyMark open={state === 'open'} />}</Twisty>
    <TreeIcon><Icon name={icon} /></TreeIcon>
    {label}
    {tag && <Tag>({tag})</Tag>}
  </TreeRow>
)

const modelTree = [
  [0, 'root', '3mm_30_18um槽.mph', 'open', 'root'],
  [1, 'globe', '全局定义', 'open'],
  [2, 'pi', '参数 1'],
  [2, 'matRing', '材料'],
  [1, 'comp', '组件 1', 'open', 'comp1'],
  [2, 'defs', '定义', 'open'],
  [3, 'csys', '边界坐标系 1', null, 'sys1'],
  [3, 'view', '视图 1', 'closed'],
  [2, 'geom', '几何 1', 'open'],
  [3, 'importIco', '导入 1', null, 'imp1'],
  [3, 'union', '形成联合体', null, 'fin'],
  [2, 'mat', '材料'],
  [2, 'optics', '几何光学', 'open', 'gop'],
  [3, 'medium', '介质属性 1'],
  [3, 'discont', '材料不连续 1'],
  [3, 'optics', '射线属性 1'],
  [3, 'wall', '壁 1'],
  [3, 'wall', '散射边界 1'],
  [3, 'release', '释放 1', null, null, true],
  [2, 'mesh', '网格 1'],
  [1, 'study', '研究 1', 'open'],
  [2, 'step', '步骤 1: 射线追踪'],
  [2, 'solver', '求解器配置', 'closed'],
  [1, 'results', '结果', 'open'],
  [2, 'dataset', '数据集', 'closed'],
  [2, 'derived', '派生值'],
  [2, 'table', '表格'],
  [2, 'plot', '射线轨迹 (gop)', 'closed'],
  [2, 'exportIco', '导出'],
  [2, 'report', '报告'],
]

const NodeMark = styled(RedBox)`
  left: 58px;
  top: 432px;
  width: 106px;
  height: 28px;
`

const ModelBuilder = () => (
  <ModelPanel>
    <PanelHead>
      <PanelTitle>模型开发器</PanelTitle>
      <Caret $color="#55585b" />
      <Pin />
    </PanelHead>
    <Toolbar>
      {tools(['left', 'right', 'up', 'down', 'show', 'collapse', 'v', 'expand', 'v', 'columns', 'v'], 14)}
    </Toolbar>
    <TreeBox>
      <ul>
        {modelTree.map(([level, icon, label, state, tag, selected], i) => (
          <Node key={i} level={level} icon={icon} label={label} state={state} tag={tag} selected={selected} />
        ))}
      </ul>
      <NodeMark />
    </TreeBox>
  </ModelPanel>
)

/* ---------- settings ---------- */

const SubTitle = styled.div`
  height: 26px;
  padding-left: 6px;
  font-size: 15px;
  line-height: 28px;
  color: #5fb0f5;
`

const SettingsScroll = styled.div`
  display: flex;
  flex: 1;
  align-items: stretch;
`

const SettingsBody = styled.div`
  position: relative;
  flex: 1;
  min-width: 0;
`

const ScrollBar = styled.div`
  display: flex;
  flex-direction: column;
  align-items: center;
  width: 17px;
  background: #fff;
`

const ScrollEnd = styled.button`
  display: flex;
  align-items: center;
  justify-content: center;
  width: 17px;
  height: 17px;
  background: #f4f5f7;
`

const ScrollThumb = styled.div`
  width: 17px;
  height: 939px;
  margin-bottom: auto;
  background: #e3e4e6;
`

const SectionHead = styled.h3`
  display: flex;
  align-items: center;
  gap: 12px;
  height: 25px;
  margin: 0;
  padding-left: 6px;
  background: #dee8f5;
  font-size: 14px;
  font-weight: 400;
`

const SectionEdge = styled.div`
  height: 4px;
  background: #dee8f5;
`

const Fields = styled.div`
  display: flex;
  flex-direction: column;
  padding: ${p => p.$pad || '5px 4px 11px'};
`

const Line = styled.div`
  display: flex;
  align-items: ${p => (p.$top ? 'flex-start' : 'center')};
`

const InlineLabel = styled.label`
  width: 47px;
`

const SymbolLabel = styled.label`
  width: 26px;
  padding-left: 2px;
  font-size: 18px;
  font-style: italic;
`

const BlockLabel = styled.label`
  display: block;
  height: 35px;
  line-height: 35px;
`

const TextInput = styled.input`
  flex: 1;
  min-width: 0;
  height: 26px;
  padding: 0 2px;
  background: #fff;
  border: 2px solid #dcdde0;
`

const Unit = styled.span`
  width: 20px;
  padding-left: 10px;
`

const SquareButton = styled.button`
  display: flex;
  align-items: center;
  justify-content: center;
  width: 22px;
  height: 22px;
  margin-left: 7px;
  background: #f0f0f2;
  border: 1px solid #cfd0d3;
  border-radius: 2px;
`

const SelectWrap = styled.div`
  position: relative;
  display: flex;
  flex: 1;
`

const SelectBox = styled.select`
  width: 100%;
  height: 24px;
  padding: 0 12px;
  appearance: none;
  background: linear-gradient(#f0f0f1, #e7e7e8);
  border: 1px solid #dcdde0;
  border-radius: 2px;
  line-height: 20px;
`

const SelectCaret = styled(Caret)`
  position: absolute;
  right: 7px;
  top: 10px;
  pointer-events: none;
`

const Select = ({ id, value }) => (
  <SelectWrap>
    <SelectBox id={id} defaultValue={value}>
      <option>{value}</option>
    </SelectBox>
    <SelectCaret $size={3} />
  </SelectWrap>
)

const ActiveToggle = styled.button`
  display: flex;
  align-items: center;
  justify-content: center;
  width: 39px;
  height: 39px;
  margin-right: 8px;
  background: #9fd0f8;
  border: 1px solid #4badf5;
  border-radius: 2px;
`

const ListBox = styled.ul`
  flex: ${p => (p.$grow ? 1 : 'none')};
  height: ${p => p.$h || 80}px;
  padding: 2px;
  border: 1px solid #dcdde0;
  border-bottom: 2px solid #d2d4d7;
`

const ListItem = styled.li`
  height: 24px;
  padding-left: 4px;
  line-height: 24px;
  background: ${p => (p.$blue ? '#b9dcfa' : '#d9d9db')};
`

const ToolGrid = styled.div`
  display: grid;
  grid-template-columns: 16px 16px;
  grid-auto-rows: 19px;
  column-gap: 12px;
  margin-left: 11px;
`

const ToolCell = styled.button`
  display: flex;
  align-items: center;
  justify-content: center;
`

const Formula = styled.div`
  display: flex;
  align-items: center;
  height: ${p => p.$h}px;
  padding-left: 1px;
`

const Bracket = styled.span`
  font-size: ${p => (p.$tall ? 28 : 24)}px;
  font-weight: 300;
`

const Greek = styled.em`
  font-size: 20px;
`

const Relation = styled.span`
  padding: 0 5px;
  font-size: ${p => (p.$wide ? 26 : 22)}px;
`

const Fraction = styled.span`
  display: flex;
  flex-direction: column;
  align-items: center;
  line-height: 20px;
  & > :first-child { width: 28px; border-bottom: 2px solid #222; text-align: center; }
`

const DomainMark = styled(RedBox)`
  left: -3px;
  top: 65px;
  width: 205px;
  height: 125px;
`

const CoexistMark = styled(RedBox)`
  left: -8px;
  top: 500px;
  width: 383px;
  height: 102px;
`

const Section = ({ title }) => (
  <SectionHead>
    <Caret $color="#444" />
    {title}
  </SectionHead>
)

const Settings = () => (
  <SettingsPanel $focus>
    <PanelHead>
      <PanelTitle $focus>设置</PanelTitle>
      <Caret $color={blue} />
      <Pin color={blue} />
    </PanelHead>
    <SubTitle>释放</SubTitle>
    <SettingsScroll>
      <SettingsBody>
        <Fields $pad="9px 4px">
          <Line>
            <InlineLabel htmlFor="label">标签:</InlineLabel>
            <TextInput id="label" defaultValue="释放 1" />
            <SquareButton aria-label="rename"><Icon name="noteBtn" size={14} /></SquareButton>
          </Line>
        </Fields>

        <Section title="域选择" />
        <Fields $pad="11px 4px 11px">
          <Line>
            <InlineLabel htmlFor="sel">选择:</InlineLabel>
            <Select id="sel" value="手动" />
          </Line>
          <Fields $pad="6px 0 0">
            <Line $top>
              <ActiveToggle aria-label="active">
                <Svg width="30" height="14" viewBox="0 0 30 14">
                  <rect x="1" y="1" width="28" height="12" rx="1" fill="#d5dde4" stroke="#7489a0" strokeWidth="1.5" />
                  <rect x="3" y="4" width="15" height="6" rx="2" fill="#4fae3e" />
                  <rect x="19" y="2" width="8" height="10" rx="1" fill="#b0b2b5" stroke="#6b7c90" strokeWidth="1.5" />
                </Svg>
              </ActiveToggle>
              <ListBox $grow $h={119}>
                <ListItem $blue>1</ListItem>
              </ListBox>
              <ToolGrid>
                {['selList', 'plus', 'copy', 'minus', 'pasteBlue', 'brush', 'extents'].map(n => (
                  <ToolCell key={n} aria-label={n}><Icon name={n} size={14} /></ToolCell>
                ))}
              </ToolGrid>
            </Line>
          </Fields>
        </Fields>

        <Section title="替代与共存" />
        <Fields>
          <BlockLabel>替代为:</BlockLabel>
          <ListBox />
          <BlockLabel>替代:</BlockLabel>
          <ListBox />
          <BlockLabel>共存项:</BlockLabel>
          <ListBox><ListItem>介质属性 1</ListItem></ListBox>
        </Fields>

        <Section title="方程" />
        <Fields>
          <BlockLabel htmlFor="eq">显示假设方程:</BlockLabel>
          <Select id="eq" value="研究 1, 射线追踪" />
          <Formula $h={46}>
            <em>f</em>
            <Bracket $tall>(</Bracket>
            <Greek>θ</Greek>
            <Bracket $tall>)</Bracket>
            <Relation $wide>=</Relation>
            <Fraction>
              <span>1</span>
              <span>2<em>π</em></span>
            </Fraction>
          </Formula>
          <Formula $h={31}>
            <Greek>θ</Greek>
            <Relation>∈</Relation>
            <Bracket>[</Bracket>
            0,2<em>π</em>
            <Bracket>]</Bracket>
          </Formula>
        </Fields>

        <Section title="初始位置" />
        <Fields>
          <BlockLabel htmlFor="pos">初始位置:</BlockLabel>
          <Select id="pos" value="密度" />
          <BlockLabel htmlFor="n">每次释放射线数:</BlockLabel>
          <Line>
            <SymbolLabel htmlFor="n">N</SymbolLabel>
            <TextInput id="n" defaultValue="100" />
            <Unit>1</Unit>
          </Line>
          <BlockLabel htmlFor="rho">密度正比于:</BlockLabel>
          <Line>
            <SymbolLabel htmlFor="rho">ρ</SymbolLabel>
            <TextInput id="rho" defaultValue="1" />
            <Unit />
          </Line>
          <BlockLabel htmlFor="order">释放分布精度阶次:</BlockLabel>
          <Select id="order" value="5" />
          <BlockLabel htmlFor="refine">位置细化因子:</BlockLabel>
          <Line>
            <TextInput id="refine" defaultValue="0" />
            <Unit>1</Unit>
          </Line>
        </Fields>
        <SectionEdge />
        <DomainMark />
        <CoexistMark />
      </SettingsBody>
      <ScrollBar>
        <ScrollEnd aria-label="scroll up">
          <Svg width="9" height="6" viewBox="0 0 9 6"><path fill="none" stroke="#bfc1c4" strokeWidth="1.5" d="M1 5l3.5-4L8 5" /></Svg>
        </ScrollEnd>
        <ScrollThumb />
        <ScrollEnd aria-label="scroll down">
          <Svg width="9" height="6" viewBox="0 0 9 6"><path fill="none" stroke="#bfc1c4" strokeWidth="1.5" d="M1 1l3.5 4L8 1" /></Svg>
        </ScrollEnd>
      </ScrollBar>
    </SettingsScroll>
  </SettingsPanel>
)

/* ---------- graphics ---------- */

const MainArea = styled.div`
  display: flex;
  flex: 1;
  flex-direction: column;
  gap: 6px;
  min-width: 0;
  margin-left: -1px;
`

const TopRow = styled.div`
  display: flex;
  gap: 5px;
`

const GraphicsPanel = styled(Panel)`
  flex: 1;
  min-width: 0;
`

const Canvas = styled.svg`
  display: block;
  width: 100%;
  background: #fff;
  font-family: "DejaVu Sans", sans-serif;
  font-size: 17px;
`

const xTicks = [-30, -20, -10, 0, 10, 20, 30, 40, 50, 60]
const yTicks = [15, 10, 5, 0, -5, -10, -15, -20, -25, -30]
const px = mm => 500 + mm * 10.88
const py = mm => 220 - mm * 10.88

const Plot = () => (
  <Canvas viewBox="0 0 1194 605" role="img" aria-label="plot">
    <g stroke="#6e6e6e" strokeWidth="1.5" fill="none">
      <rect x="66" y="8" width="1118" height="572" />
      {xTicks.map(v => (
        <path key={v} d={`M${px(v)} 0v8M${px(v)} 580v8`} />
      ))}
      {yTicks.map(v => (
        <path key={v} d={`M59 ${py(v)}h7M1184 ${py(v)}h7`} />
      ))}
      <path d={`M247 ${py(0)}H791`} />
    </g>
    <rect x="497" y="220" width="33" height="218" fill="#8bf28b" />
    <path fill="none" stroke="#0ea30e" strokeWidth="2.5" strokeLinejoin="round" d="M497 220v218h33V220" />
    <path fill="#000" d="M62 572l8 10h-8z" />
    <g fill="#111">
      <text x="69" y="22">mm</text>
      <text x="1150" y="577">mm</text>
      {xTicks.map(v => <text key={v} x={px(v)} y="601">{v}</text>)}
      {yTicks.map(v => <text key={v} x="57" y={py(v) + 13} textAnchor="end">{v}</text>)}
    </g>
    <g transform="translate(1164 12)">
      <path fill="#e8e9ec" d="M0 3l10-3 8 4-3 9-9 3-6-5z" />
      <g transform="translate(3 2) scale(.7)">{colormap}</g>
    </g>
  </Canvas>
)

const Graphics = () => (
  <GraphicsPanel>
    <PanelHead>
      <PanelTitle>图形</PanelTitle>
      <Caret $color="#55585b" />
      <Pin />
    </PanelHead>
    <Toolbar>
      {tools([
        'zoomIn', 'zoomOut', 'zoomBox', 'v', 'extents', 'fit', '|', 'axes', 'v', '|', 'domain', 'v', '|',
        'printGrey', 'v', 'printBlue', 'v', 'selectBox', 'brush', '|', 'hide', 'resetHide', 'viewHide', 'v', '|',
        '*grid', '|', 'clip', 'link', 'v', '|', 'shutter', 'v', 'camera', 'printer',
      ], 14)}
    </Toolbar>
    <Plot />
  </GraphicsPanel>
)

/* ---------- add material ---------- */

const MaterialPanel = styled(Panel)`
  flex: none;
  width: 439px;
  padding-top: 5px;
  border-right: 0;
  overflow: hidden;
`

const TabRow = styled.div`
  display: flex;
  flex: none;
  gap: 8px;
  height: 25px;
  padding-left: 4px;
  border-bottom: 1px solid #d9dce2;
`

const ViewTab = styled.button`
  display: flex;
  align-items: center;
  gap: 7px;
  height: 25px;
  padding: 0 ${p => (p.$closable ? 5 : 3)}px 0 3px;
  font-size: 14px;
  white-space: nowrap;
  background: ${p => (p.$active ? '#fafbff' : '#ebebec')};
  border: 1px solid ${p => (p.$active ? '#d9dce2' : '#ebebec')};
  border-bottom: 0;
  color: ${p => (p.$active ? '#3d63ac' : '#1a1a1a')};
`

const CloseMark = () => (
  <Svg width="9" height="9" viewBox="0 0 9 9" aria-hidden="true">
    <path stroke="#cdd3dd" strokeWidth="1.5" d="M1 1l7 7M8 1L1 8" />
  </Svg>
)

const Tab = ({ label, active, closable }) => (
  <ViewTab $active={active} $closable={closable}>
    {label}
    {closable && <CloseMark />}
  </ViewTab>
)

const AddBar = styled.div`
  display: flex;
  align-items: center;
  gap: 13px;
  height: 42px;
  padding: 8px 0 0 5px;
`

const AddButton = styled.button`
  display: flex;
  align-items: center;
  gap: 5px;
  color: #6c6e70;
`

const SearchRow = styled.div`
  display: flex;
  gap: 6px;
  width: 480px;
  padding-left: 4px;
`

const SearchInput = styled(TextInput)`
  flex: none;
  width: 400px;
`

const SearchButton = styled.button`
  height: 26px;
  padding: 0 13px;
  background: linear-gradient(#f2f2f3, #e3e3e5);
  border: 1px solid #cfd0d3;
  border-radius: 2px;
  white-space: nowrap;
`

const LibraryBox = styled(TreeBox)`
  margin: 4px 0 8px 4px;
  border-right: 0;
`

const libraries = [
  ['recent', '最近使用的材料'],
  ['books', '材料库'],
  ['colormap', '内置材料'],
  ['acdc', 'AC/DC'],
  ['battery', '材料'],
  ['slope', '材料'],
  ['bio', '材料'],
  ['bubble', '材料'],
  ['delta', '材料'],
  ['chem', '材料'],
  ['fluid', '液体和气体'],
  ['mems', 'MEMS'],
  ['magnet', '材料'],
  ['wave', '光学'],
  ['piezo', '压电'],
  ['resist', '材料'],
  ['car', '材料'],
  ['chip', '材料'],
  ['thermo', '材料'],
  ['userLib', '用户定义库'],
]

const AddMaterial = () => (
  <MaterialPanel>
    <TabRow>
      <Tab label="添加材料" active closable />
      <Tab label="添加物理场" closable />
    </TabRow>
    <AddBar>
      <AddButton><Icon name="globeGrey" size={14} />添加到全局材料<Caret $size={3} $color="#6c6e70" /></AddButton>
      <AddButton><Icon name="plusThin" size={14} />添加到组件<Caret $size={3} $color="#6c6e70" /></AddButton>
    </AddBar>
    <SearchRow>
      <SearchInput aria-label="搜索" />
      <SearchButton>搜索</SearchButton>
    </SearchRow>
    <LibraryBox>
      <ul>
        {libraries.map(([icon, label], i) => (
          <Node key={i} level={0} icon={icon} label={label} state="closed" />
        ))}
      </ul>
    </LibraryBox>
  </MaterialPanel>
)

/* ---------- messages ---------- */

const MessagePanel = styled(Panel)`
  flex: 1;
  padding-top: 4px;
  border-right: 0;
`

const LogTools = styled.div`
  display: flex;
  align-items: center;
  height: 34px;
  padding: 10px 0 0 4px;
`

const Log = styled.div`
  flex: 1;
  margin: 0 0 4px 4px;
  padding: 1px;
  border-top: 1px solid #d9dce2;
  border-left: 1px solid #d9dce2;
  border-bottom: 1px solid #d9dce2;
  line-height: 22px;
`

const Messages = () => (
  <MessagePanel>
    <TabRow>
      <Tab label="消息" active closable />
      <Tab label="进度" />
      <Tab label="日志" />
      <Tab label="辅助数据" closable />
      <Tab label="表格" closable />
    </TabRow>
    <LogTools>
      <ToolButton aria-label="clear"><Icon name="broom" size={14} /></ToolButton>
      <ToolButton $on aria-label="mail"><Icon name="mail" size={14} /></ToolButton>
    </LogTools>
    <Log>
      <div>COMSOL Multiphysics 6.1.0.252</div>
      <div>[2024年12月15日 下午4:14] 打开的文件：E:\计量院软件\Comsol6.1\Files\Dongximing\3mm_30_18um槽.mph</div>
    </Log>
  </MessagePanel>
)

/* ---------- arrow note drawn over the panels ---------- */

const ArrowLayer = styled.svg`
  position: absolute;
  left: 641px;
  top: 308px;
  z-index: 6;
  pointer-events: none;
`

const Arrow = () => (
  <ArrowLayer width="712" height="236" viewBox="0 0 712 236" aria-hidden="true">
    <path fill="#17ac17" d="M0 0L700.5 225.5L702.5 221L711 230L698 233.5L700 230.200z" />
  </ArrowLayer>
)

const quick = [
  'newFile', 'open', 'save', 'saveAs', 'play', 'undo', 'redo', 'copy', 'paste', 'duplicate', 'trash',
  'selectBox', 'brush', 'find',
]

const App = () => (
  <Page>
    <GlobalStyle />
    <TitleBar>
      <QuickAccess>
        <QuickButton aria-label="menu"><Icon name="logo" /></QuickButton>
        <QuickDivider />
        {quick.map(n => (
          <QuickButton key={n} aria-label={n}><Icon name={n} size={15} /></QuickButton>
        ))}
        <QuickButton $narrow aria-label="more"><Caret $size={2} /></QuickButton>
        <QuickDivider $last />
      </QuickAccess>
      <WindowTitle>3mm_30_18um槽.mph - COMSOL Multiphysics</WindowTitle>
      <WindowButton aria-label="minimize">
        <Svg width="11" height="11" viewBox="0 0 11 11"><path stroke="#333" d="M0 5.5h11" /></Svg>
      </WindowButton>
      <WindowButton aria-label="restore">
        <Svg width="11" height="11" viewBox="0 0 11 11">
          <rect x=".5" y="2.5" width="8" height="8" rx="2" fill="none" stroke="#333" />
          <path fill="none" stroke="#333" d="M3 .5h5a2.5 2.5 0 0 1 2.5 2.5v5" />
        </Svg>
      </WindowButton>
    </TitleBar>
    <Ribbon />
    <Workspace>
      <ModelBuilder />
      <Settings />
      <MainArea>
        <TopRow>
          <Graphics />
          <AddMaterial />
        </TopRow>
        <Messages />
      </MainArea>
    </Workspace>
    <Arrow />
  </Page>
)

export default App
